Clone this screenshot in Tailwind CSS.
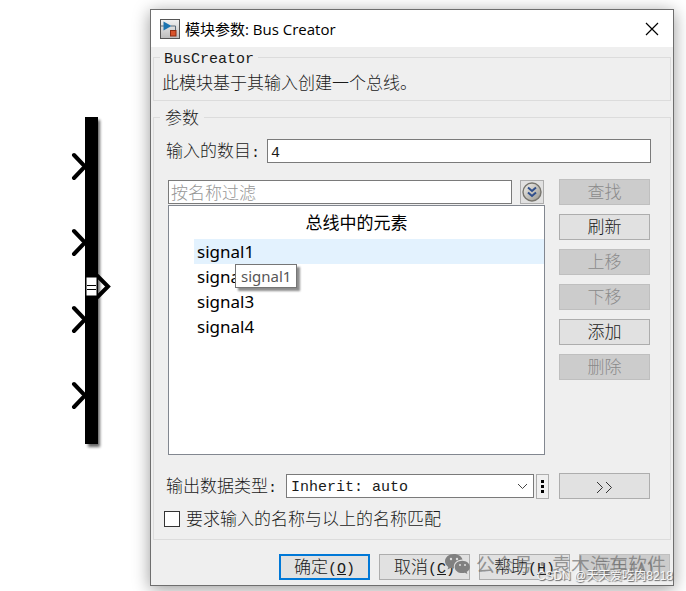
<!DOCTYPE html>
<html lang="zh-CN">
<head>
<meta charset="utf-8">
<meta name="viewport" content="width=device-width, initial-scale=1">
<title>模块参数: Bus Creator</title>
<script src="https://cdn.jsdelivr.net/npm/@tailwindcss/browser@4"></script>
</head>
<body class="min-h-screen overflow-hidden bg-white flex items-start text-[17px] leading-[18px] text-[#1a1a1a] font-['Liberation_Mono','Noto_Sans_CJK_SC',monospace] font-light">

<!-- Bus Creator block on the canvas -->
<aside class="w-[150px] shrink-0 pt-[110px]">
  <svg class="block" width="150" height="345" viewBox="0 110 150 345" fill="none" role="img" aria-label="Bus Creator">
    <defs><filter id="soft" x="-100%" y="-5%" width="300%" height="110%"><feGaussianBlur stdDeviation="1.6"/></filter></defs>
    <rect x="88" y="120" width="12" height="327" fill="#000" opacity=".6" filter="url(#soft)"/>
    <rect x="85" y="117" width="13" height="327" fill="#000"/>
    <g stroke="#000" stroke-width="4" stroke-linecap="round">
      <path d="M74 155l11 11.500-11 11.500M74 231l11 11.500-11 11.500M74 308l11 11.500-11 11.500M74 384l11 11.500-11 11.500"/>
    </g>
    <path d="M97 275.500l11 11-11 11" stroke="#000" stroke-width="4"/>
    <rect x="86" y="277" width="11" height="19" fill="#fff" stroke="#000"/>
    <path d="M87 285.500h9M87 289.500h9" stroke="#000"/>
  </svg>
</aside>

<main class="relative mt-[9px] mr-[12px] flex-1 min-w-0 border border-[#6e6e6e] bg-[#efefef] shadow-[0_3px_16px_rgba(0,0,0,0.4)]">
  <header class="flex items-center justify-between h-[37px] bg-white pl-[9px] pr-[14px] text-black">
    <div class="flex items-center gap-[5px]">
      <svg width="20" height="20" viewBox="0 0 20 20" aria-hidden="true">
        <defs><linearGradient id="tile" x2="0" y2="1"><stop stop-color="#f2f2f2"/><stop offset="1" stop-color="#bcbcbc"/></linearGradient></defs>
        <rect x=".5" y=".5" width="19" height="19" fill="url(#tile)" stroke="#555"/>
        <path d="M1 7h3M11 7h4.500V11" stroke="#5a6a78" fill="none"/>
        <path d="M3.500 2.500l8 4.500-8 4.500z" fill="#1c74b0"/>
        <rect x="10.500" y="11.500" width="5.500" height="5.500" fill="#d8532b" stroke="#8e2d12"/>
      </svg>
      <h1 class="text-[15px] leading-[20px] font-normal whitespace-nowrap font-['Open_Sans','Noto_Sans_CJK_SC',sans-serif]">模块参数: Bus Creator</h1>
    </div>
    <button type="button" aria-label="关闭" class="size-[14px]">
      <svg width="14" height="14" viewBox="0 0 14 14" stroke="#000" stroke-width="1.200"><path d="M1 1l12 12M13 1L1 13"/></svg>
    </button>
  </header>

  <form class="px-[2px] pt-px pb-[5px]">
    <fieldset class="border border-[#dcdcdc] px-[8px]">
      <legend class="ml-[-2px] px-[4px] h-[18px] pt-[3px] text-[15px]">BusCreator</legend>
      <p class="pt-[4px] leading-[30px]">此模块基于其输入创建一个总线。</p>
    </fieldset>

    <fieldset class="mt-[7px] border border-[#dcdcdc] pl-[10px] pr-[19px] pb-[9px]">
      <legend class="ml-[-4px] px-[5px] h-[18px] pt-[3px]">参数</legend>

      <div class="mt-[13px] ml-[2px] flex items-center h-[24px]">
        <label for="count" class="w-[101px] shrink-0 pt-[4px]">输入的数目<span class="text-[15px]">:</span></label>
        <input id="count" type="text" value="4" class="flex-1 min-w-0 h-[24px] border border-[#7a7a7a] bg-white px-[3px] pt-[4px] text-[15px]">
      </div>

      <div class="mt-[16px] ml-[4px] mr-px grid grid-cols-[minmax(0,1fr)_91px] gap-x-[14px]">
        <div>
          <div class="mt-px flex items-center gap-[8px]">
            <input type="text" aria-label="按名称过滤" placeholder="按名称过滤" class="flex-1 min-w-0 h-[24px] border border-[#7a7a7a] bg-white px-[2px] pt-[4px] placeholder:text-[#969696]">
            <button type="button" aria-label="展开选项" class="mr-px size-[24px] border border-[#adadad] bg-[#e1e1e1] flex items-center justify-center">
              <svg width="20" height="20" viewBox="0 0 20 20" fill="none">
                <defs><linearGradient id="ball" x2="1" y2="1"><stop stop-color="#f4f3ef"/><stop offset="1" stop-color="#96948c"/></linearGradient></defs>
                <circle cx="10" cy="10" r="9" fill="url(#ball)" stroke="#77756e" stroke-width="1.400"/>
                <path d="M6 5.500l4 3.500 4-3.500M6 10.500l4 3.500 4-3.500" stroke="#2f4f8c" stroke-width="2"/>
              </svg>
            </button>
          </div>
          <table class="mt-px block h-[250px] border border-[#828790] bg-white text-black font-normal font-['Noto_Sans','Noto_Sans_CJK_SC',sans-serif]">
            <thead class="block"><tr class="block"><th class="block leading-[33px] font-normal text-center">总线中的元素</th></tr></thead>
            <tbody class="block pl-[25px] leading-[25px]">
              <tr class="block bg-[#e3f2fe]"><td class="block relative pl-[3px]">signal1
                <span role="tooltip" class="absolute left-[41px] top-[25px] border border-[#767676] bg-white px-[5px] text-[15px] leading-[22px] text-[#575757] shadow-[3px_3px_2px_rgba(0,0,0,0.45)]">signal1</span></td></tr>
              <tr class="block"><td class="block pl-[3px]">signal2</td></tr>
              <tr class="block"><td class="block pl-[3px]">signal3</td></tr>
              <tr class="block"><td class="block pl-[3px]">signal4</td></tr>
            </tbody>
          </table>
        </div>
        <div class="flex flex-col gap-[9px]">
          <button type="button" disabled class="h-[26px] pt-[4px] border border-[#bfbfbf] bg-[#cccccc] text-[#8a8a8a]">查找</button>
          <button type="button" class="h-[26px] pt-[4px] border border-[#adadad] bg-[#e1e1e1]">刷新</button>
          <button type="button" disabled class="h-[26px] pt-[4px] border border-[#bfbfbf] bg-[#cccccc] text-[#8a8a8a]">上移</button>
          <button type="button" disabled class="h-[26px] pt-[4px] border border-[#bfbfbf] bg-[#cccccc] text-[#8a8a8a]">下移</button>
          <button type="button" class="h-[26px] pt-[4px] border border-[#adadad] bg-[#e1e1e1]">添加</button>
          <button type="button" disabled class="h-[26px] pt-[4px] border border-[#bfbfbf] bg-[#cccccc] text-[#8a8a8a]">删除</button>
        </div>
      </div>

      <div class="mt-[18px] ml-[2px] mr-px flex items-center h-[26px]">
        <label for="dtype" class="w-[120px] shrink-0 pt-[4px]">输出数据类型<span class="text-[15px]">:</span></label>
        <div class="relative flex-1 min-w-0">
          <select id="dtype" class="block w-full h-[24px] appearance-none border border-[#7a7a7a] bg-white px-[4px] pt-[4px] text-[15px]">
            <option>Inherit: auto</option>
          </select>
          <svg class="absolute right-[6px] top-[9px] pointer-events-none" width="11" height="7" viewBox="0 0 11 7" fill="none" stroke="#444"><path d="M1 1l4.500 4.500L10 1"/></svg>
        </div>
        <button type="button" aria-label="更多" class="ml-[2px] w-[13px] h-[25px] border border-[#adadad] bg-[#f0f0f0] flex items-center justify-center">
          <svg width="3" height="13" viewBox="0 0 3 13"><path d="M0 0h3v3H0zM0 5h3v3H0zM0 10h3v3H0z"/></svg>
        </button>
        <button type="button" aria-label="展开" class="ml-[10px] w-[91px] h-[26px] pt-[2px] border border-[#adadad] bg-[#e1e1e1] flex items-center justify-center">
          <svg width="17" height="13" viewBox="0 0 17 13" fill="none" stroke="#333"><path d="M1 1l5.500 5.500L1 12M10 1l5.500 5.500L10 12"/></svg>
        </button>
      </div>

      <div class="mt-[9px] flex items-center gap-[6px] h-[22px]">
        <input id="match" type="checkbox" class="size-[16px] shrink-0 appearance-none border border-[#333] bg-white">
        <label for="match" class="pt-[4px]">要求输入的名称与以上的名称匹配</label>
      </div>
    </fieldset>

    <div class="mt-[14px] mr-px flex justify-end gap-[9px]">
      <button type="submit" class="w-[91px] h-[26px] pt-[4px] border-2 border-[#0078d7] bg-[#e1e1e1]">确定<span class="text-[15px]">(<u>O</u>)</span></button>
      <button type="button" class="w-[91px] h-[26px] pt-[4px] border border-[#adadad] bg-[#e1e1e1]">取消<span class="text-[15px]">(<u>C</u>)</span></button>
      <button type="button" class="w-[91px] h-[26px] pt-[4px] border border-[#adadad] bg-[#e1e1e1]">帮助<span class="text-[15px]">(<u>H</u>)</span></button>
      <button type="button" disabled class="w-[91px] h-[26px] pt-[4px] border border-[#bfbfbf] bg-[#cccccc] text-[#8a8a8a]">应用<span class="text-[15px]">(<u>A</u>)</span></button>
    </div>
  </form>

  <!-- Watermarks -->
  <div class="absolute right-[7px] bottom-[10px] pointer-events-none flex items-center gap-[6px] text-[19px] leading-[22px] font-normal whitespace-nowrap text-[#707070]/70 font-['Noto_Sans_CJK_SC',sans-serif]">
    <svg width="25" height="20" viewBox="0 0 25 20" fill="#808080" aria-hidden="true">
      <path d="M9 0C4 0 0 3.200 0 7.300c0 2.300 1.300 4.300 3.300 5.700L2.500 15.500l3-1.500c1 .3 2.300.5 3.500.5C8 9 12 5.500 17.500 5.500 16.500 2.300 13 0 9 0z"/>
      <path d="M17.300 6.700c-4.300 0-7.600 2.800-7.600 6.200s3.300 6.200 7.600 6.200c.9 0 1.800-.1 2.600-.4l2.500 1.200-.7-2.100c2-1.100 3.200-2.900 3.200-4.900 0-3.400-3.400-6.200-7.600-6.200z"/>
      <g fill="#dedede"><circle cx="6" cy="5" r="1.200"/><circle cx="12" cy="5" r="1.200"/><circle cx="15" cy="11" r="1"/><circle cx="20" cy="11" r="1"/></g>
    </svg>
    <span>公众号·袁木汽车软件</span>
  </div>
  <div class="absolute right-0 bottom-0 pointer-events-none text-[12px] leading-[18px] font-normal whitespace-nowrap text-white/90 text-shadow-[1px_1px_1px_#666] font-['Liberation_Sans','Noto_Sans_CJK_SC',sans-serif]">CSDN @天天爱吃肉8218</div>
</main>
</body>
</html>
